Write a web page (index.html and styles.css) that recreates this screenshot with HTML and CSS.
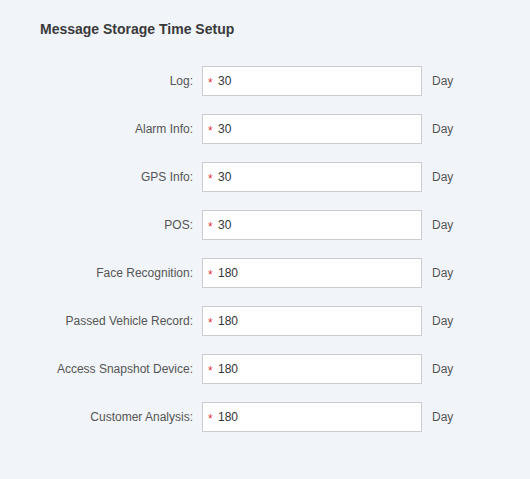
FILE: index.html
```html
<!DOCTYPE html>
<html>
<head>
<meta charset="utf-8">
<link rel="stylesheet" href="styles.css">
</head>
<body>
<div class="page">
  <h2 class="title">Message Storage Time Setup</h2>
  <div class="form">
    <div class="row"><label class="label">Log:</label><div class="input"><span class="req">*</span><span class="val">30</span></div><span class="unit">Day</span></div>
    <div class="row"><label class="label">Alarm Info:</label><div class="input"><span class="req">*</span><span class="val">30</span></div><span class="unit">Day</span></div>
    <div class="row"><label class="label">GPS Info:</label><div class="input"><span class="req">*</span><span class="val">30</span></div><span class="unit">Day</span></div>
    <div class="row"><label class="label">POS:</label><div class="input"><span class="req">*</span><span class="val">30</span></div><span class="unit">Day</span></div>
    <div class="row"><label class="label">Face Recognition:</label><div class="input"><span class="req">*</span><span class="val">180</span></div><span class="unit">Day</span></div>
    <div class="row"><label class="label">Passed Vehicle Record:</label><div class="input"><span class="req">*</span><span class="val">180</span></div><span class="unit">Day</span></div>
    <div class="row"><label class="label">Access Snapshot Device:</label><div class="input"><span class="req">*</span><span class="val">180</span></div><span class="unit">Day</span></div>
    <div class="row"><label class="label">Customer Analysis:</label><div class="input"><span class="req">*</span><span class="val">180</span></div><span class="unit">Day</span></div>
  </div>
</div>
</body>
</html>
```
FILE: styles.css
```css
html, body {
  margin: 0;
  padding: 0;
  background: #f1f4f8;
  font-family: "Liberation Sans", Arial, sans-serif;
}
.page {
  width: 530px;
  height: 479px;
  box-sizing: border-box;
  padding: 19px 0 0 40px;
}
.title {
  margin: 0;
  font-size: 14px;
  font-weight: bold;
  line-height: 20px;
  color: #3a3a3a;
}
.form {
  margin-top: 27px;
  display: flex;
  flex-direction: column;
  gap: 18px;
}
.row {
  display: flex;
  align-items: center;
  height: 30px;
}
.label {
  width: 153px;
  text-align: right;
  font-size: 12px;
  color: #555;
  margin-right: 9px;
}
.input {
  width: 220px;
  height: 30px;
  box-sizing: border-box;
  border: 1px solid #ccc;
  background: #fff;
  display: flex;
  align-items: center;
  padding-left: 5px;
  font-size: 12px;
  color: #333;
}
.req {
  color: #d9363e;
  font-size: 12px;
  width: 10px;
  position: relative;
  top: 2px;
}
.unit {
  margin-left: 10px;
  font-size: 12px;
  color: #555;
}
```
